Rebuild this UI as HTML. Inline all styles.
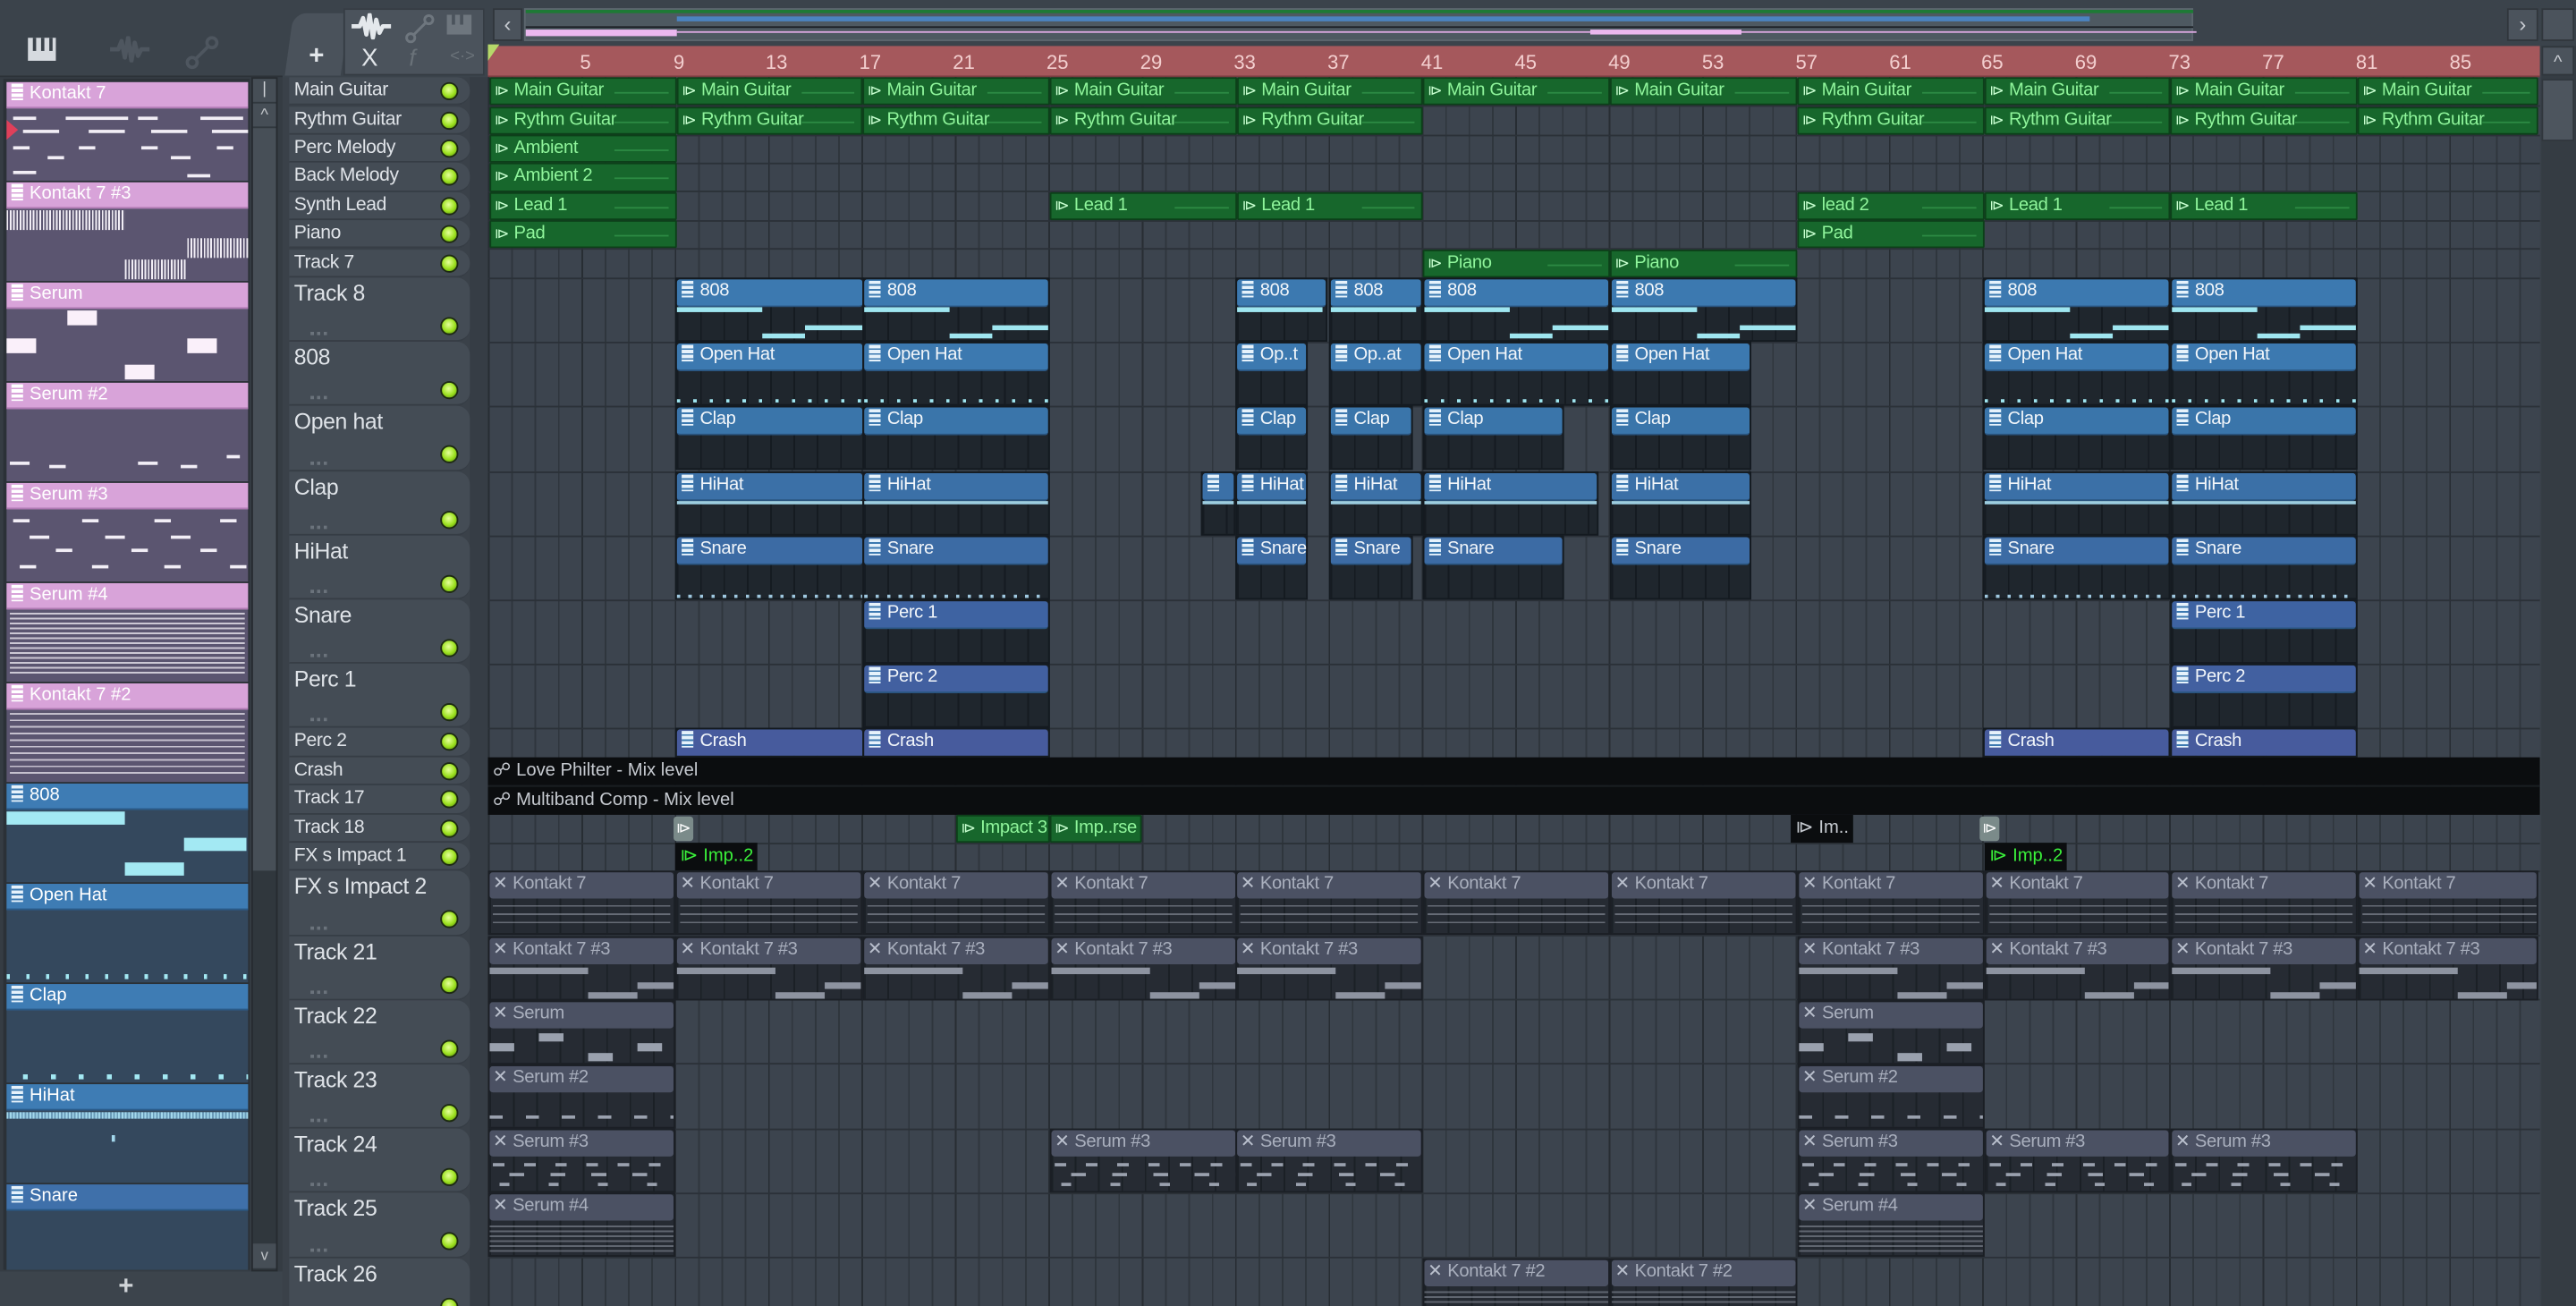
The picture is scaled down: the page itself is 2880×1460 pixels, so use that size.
<!DOCTYPE html>
<html><head><meta charset="utf-8">
<style>
html,body{margin:0;padding:0;width:2880px;height:1460px;overflow:hidden;background:#3a4149;}
#s{position:absolute;left:0;top:0;width:1568px;height:795px;transform:scale(1.836735,1.836478);transform-origin:0 0;font-family:"Liberation Sans Narrow","Liberation Sans",sans-serif;background:#3a4149;overflow:hidden}
.a{position:absolute;box-sizing:border-box}
.c{position:absolute;box-sizing:border-box;overflow:hidden;white-space:nowrap;font-size:11px;line-height:15px;letter-spacing:-0.2px}
.g{background:#17672c;border:1px solid #0c4019;color:#8ff59b;height:17.4px;padding-left:2px;border-radius:1px}
.g::after{content:"";position:absolute;left:75px;right:4px;top:8px;height:1px;background:#2c8a43}
.ar{font-size:9px;color:#c8ffd0;margin-right:3px}
.b{background:#1f262d;border:1px solid #141a20;height:39px;background-image:repeating-linear-gradient(90deg,#151b21 0 1px,transparent 1px 14.2px)}
.b .h{height:16px;background:#3c79b0;color:#f2f6fa;border-radius:2px;border-bottom:1px solid #2a5580;padding-left:2px}
.ic{display:inline-block;width:7px;height:10px;background:#e6f2fb;margin:0 4px 0 1px;vertical-align:-1px;background-image:repeating-linear-gradient(180deg,#e6f2fb 0 2px,#3c79b0 2px 3px)}
.k{background:#262b33;border:1px solid #1b1f25;height:39px;background-image:repeating-linear-gradient(90deg,#1b2026 0 1px,transparent 1px 14.2px)}
.k .h{height:16px;background:#4b5163;color:#a9afbd;border-radius:2px;padding-left:2px}
.x{color:#b9bfcc;margin-right:3px;font-size:11px}
.row{position:absolute;left:176px;width:110px;box-sizing:border-box;background:#444c55;border-radius:0 8px 8px 0;border-bottom:1px solid #363d45;color:#dfe3e8;font-size:11.5px;padding-left:3px;line-height:17px;letter-spacing:-0.2px}
.led{position:absolute;left:92px;width:9px;height:9px;border-radius:50%;background:radial-gradient(circle at 45% 40%,#e4ff9a,#9be01d 55%,#4e7c10);border:1px solid #1d2a12}
.dots{position:absolute;left:13px;bottom:3px;width:10px;height:2px;background:repeating-linear-gradient(90deg,#6b737c 0 2px,transparent 2px 4px)}
.tall{font-size:13.5px;line-height:20px}
.nt{position:absolute;height:3px;background:#9fe6f0}
.pk{position:absolute;left:4px;width:147px;height:60px;background:#5b5570}
.pk .h{height:15px;background:#d8a3d9;color:#fff;font-size:11px;line-height:15px;padding-left:2px;border-bottom:1px solid #b07ab4}
.pk .h .ic{background-image:repeating-linear-gradient(180deg,#fff 0 2px,#d8a3d9 2px 3px)}
.pb{position:absolute;left:4px;width:147px;height:60px;background:#34485d}
.pb .h{height:15px;background:#3e7cb4;color:#fff;font-size:11px;line-height:15px;padding-left:2px;border-bottom:1px solid #2a5a88}
.w{position:absolute;height:2px;background:#f2eef6}
.au{position:absolute;background:#0b0d0f;color:#c6cad0;font-size:11px;line-height:17px;padding-left:3px;white-space:nowrap;overflow:hidden;box-sizing:border-box}
</style></head><body><div id="s">

<div class="a" style="left:0;top:0;width:1568px;height:47px;background:#3b434b"></div>
<div class="a" style="left:0;top:46px;width:172px;height:1px;background:#2c3238"></div>
<div class="a" style="left:17px;top:23px;width:17px;height:14px;background:#d6dadf"></div>
<div class="a" style="left:20px;top:23px;width:2px;height:8px;background:#3b434b"></div>
<div class="a" style="left:25px;top:23px;width:2px;height:8px;background:#3b434b"></div>
<div class="a" style="left:30px;top:23px;width:2px;height:8px;background:#3b434b"></div>
<svg class="a" style="left:66px;top:22px" width="26" height="16"><path d="M1 8 L6 8 L8 3 L10 13 L12 1 L14 15 L16 4 L18 12 L20 8 L25 8" fill="none" stroke="#4e565f" stroke-width="2.6" stroke-linejoin="round"/></svg>
<svg class="a" style="left:112px;top:21px" width="22" height="22"><circle cx="5" cy="17" r="3" fill="none" stroke="#4e565f" stroke-width="2"/><circle cx="17" cy="5" r="3" fill="none" stroke="#4e565f" stroke-width="2"/><line x1="7" y1="15" x2="15" y2="7" stroke="#4e565f" stroke-width="2"/></svg>

<div class="a" style="left:176px;top:8px;width:34px;height:38px;background:#4a525b;border-radius:8px 0 0 0;transform:skewX(-8deg)"></div>
<div class="a" style="left:188px;top:26px;color:#e2e6ea;font-size:16px;font-weight:bold">+</div>
<div class="a" style="left:209px;top:5px;width:86px;height:41px;background:#4b535c;border:1px solid #353c43"></div>
<svg class="a" style="left:213px;top:8px" width="26" height="16"><path d="M1 8 L6 8 L8 3 L10 13 L12 1 L14 15 L16 4 L18 12 L20 8 L25 8" fill="none" stroke="#e4e8ec" stroke-width="2.6" stroke-linejoin="round"/></svg>
<svg class="a" style="left:246px;top:8px" width="20" height="20"><circle cx="4" cy="15" r="2.5" fill="none" stroke="#6e767e" stroke-width="1.6"/><circle cx="15" cy="4" r="2.5" fill="none" stroke="#6e767e" stroke-width="1.6"/><line x1="6" y1="13" x2="13" y2="6" stroke="#6e767e" stroke-width="1.6"/></svg>
<div class="a" style="left:272px;top:9px;width:15px;height:12px;background:#6e767e"></div>
<div class="a" style="left:275px;top:9px;width:2px;height:6px;background:#4b535c"></div>
<div class="a" style="left:280px;top:9px;width:2px;height:6px;background:#4b535c"></div>
<div class="a" style="left:220px;top:27px;color:#e2e6ea;font-size:15px">X</div>
<div class="a" style="left:249px;top:27px;color:#6a7279;font-size:14px;font-style:italic">f</div>
<div class="a" style="left:274px;top:29px;color:#6a7279;font-size:10px">&lt;·&gt;</div>
<div class="a" style="left:300px;top:5px;width:18px;height:20px;background:#4b535c;border:1px solid #30363c;color:#c8ccd2;font-size:13px;text-align:center;line-height:18px">‹</div>
<div class="a" style="left:319px;top:5px;width:1016px;height:20px;background:#4e5961;border:1px solid #5c666e"></div>
<div class="a" style="left:320px;top:6px;width:1015px;height:2px;background:#1e7a35"></div>
<div class="a" style="left:412px;top:10px;width:860px;height:3px;background:#4b83bf"></div>
<div class="a" style="left:320px;top:16px;width:1015px;height:1px;background:#1a1f24"></div>
<div class="a" style="left:320px;top:18px;width:92px;height:4px;background:#eab7ee"></div>
<div class="a" style="left:412px;top:19px;width:925px;height:1px;background:#dca8e0"></div>
<div class="a" style="left:968px;top:18px;width:92px;height:3px;background:#eab7ee"></div>
<div class="a" style="left:1526px;top:5px;width:19px;height:20px;background:#4b535c;border:1px solid #30363c;color:#c8ccd2;font-size:13px;text-align:center;line-height:18px">›</div>
<div class="a" style="left:1547px;top:5px;width:20px;height:20px;background:#4b535c;border:1px solid #30363c"></div>

<div class="a" style="left:297px;top:28px;width:1249px;height:19px;background:#a5585c;border-bottom:1px solid #7a3d40"></div>
<div class="a" style="left:297px;top:27px;width:0;height:0;border-left:7px solid #b6d86a;border-bottom:10px solid transparent"></div>
<div class="a" style="top:30px;left:0;width:1568px;height:16px;color:#f3cfcf;font-size:12px;line-height:16px">
<span class="a" style="left:353px">5</span><span class="a" style="left:410px">9</span><span class="a" style="left:466px">13</span><span class="a" style="left:523px">17</span><span class="a" style="left:580px">21</span><span class="a" style="left:637px">25</span><span class="a" style="left:694px">29</span><span class="a" style="left:751px">33</span><span class="a" style="left:808px">37</span><span class="a" style="left:865px">41</span><span class="a" style="left:922px">45</span><span class="a" style="left:979px">49</span><span class="a" style="left:1036px">53</span><span class="a" style="left:1093px">57</span><span class="a" style="left:1150px">61</span><span class="a" style="left:1206px">65</span><span class="a" style="left:1263px">69</span><span class="a" style="left:1320px">73</span><span class="a" style="left:1377px">77</span><span class="a" style="left:1434px">81</span><span class="a" style="left:1491px">85</span>
</div>
<div class="a" style="left:1547px;top:28px;width:21px;height:767px;background:#353c43"></div>
<div class="a" style="left:1547px;top:28px;width:20px;height:18px;background:#4b535c;border:1px solid #30363c;color:#c8ccd2;font-size:11px;text-align:center;line-height:18px">^</div>
<div class="a" style="left:1547px;top:48px;width:20px;height:38px;background:#4d555e;border:1px solid #30363c"></div>

<div class="a" style="left:286px;top:47px;width:11px;height:748px;background:#363d45"></div>
<div class="a" style="left:297px;top:47px;width:1249px;height:748px;background-color:#3c444e;background-image:repeating-linear-gradient(90deg,#272d33 0 1px,transparent 1px 56.85px),repeating-linear-gradient(90deg,#2f363d 0 1px,transparent 1px 14.2125px)"></div>
<div class="a" style="left:297px;top:47px;width:1249px;height:748px;background:transparent">
<div class="a" style="left:0;top:17px;width:100%;height:1px;background:#2b3138"></div>
<div class="a" style="left:0;top:34.5px;width:100%;height:1px;background:#2b3138"></div>
<div class="a" style="left:0;top:52px;width:100%;height:1px;background:#2b3138"></div>
<div class="a" style="left:0;top:69.3px;width:100%;height:1px;background:#2b3138"></div>
<div class="a" style="left:0;top:86.7px;width:100%;height:1px;background:#2b3138"></div>
<div class="a" style="left:0;top:104px;width:100%;height:1px;background:#2b3138"></div>
<div class="a" style="left:0;top:121.5px;width:100%;height:1px;background:#2b3138"></div>
<div class="a" style="left:0;top:161px;width:100%;height:1px;background:#2b3138"></div>
<div class="a" style="left:0;top:200px;width:100%;height:1px;background:#2b3138"></div>
<div class="a" style="left:0;top:239.5px;width:100%;height:1px;background:#2b3138"></div>
<div class="a" style="left:0;top:278.7px;width:100%;height:1px;background:#2b3138"></div>
<div class="a" style="left:0;top:318px;width:100%;height:1px;background:#2b3138"></div>
<div class="a" style="left:0;top:357px;width:100%;height:1px;background:#2b3138"></div>
<div class="a" style="left:0;top:396px;width:100%;height:1px;background:#2b3138"></div>
<div class="a" style="left:0;top:466px;width:100%;height:1px;background:#2b3138"></div>
<div class="a" style="left:0;top:483px;width:100%;height:1px;background:#2b3138"></div>
<div class="a" style="left:0;top:522px;width:100%;height:1px;background:#2b3138"></div>
<div class="a" style="left:0;top:561px;width:100%;height:1px;background:#2b3138"></div>
<div class="a" style="left:0;top:600px;width:100%;height:1px;background:#2b3138"></div>
<div class="a" style="left:0;top:640px;width:100%;height:1px;background:#2b3138"></div>
<div class="a" style="left:0;top:679px;width:100%;height:1px;background:#2b3138"></div>
<div class="a" style="left:0;top:718px;width:100%;height:1px;background:#2b3138"></div>
</div>

<div class="row" style="top:47px;height:17.4px">Main Guitar<div class="led" style="top:3px"></div></div>
<div class="row" style="top:64.5px;height:17.4px">Rythm Guitar<div class="led" style="top:3px"></div></div>
<div class="row" style="top:82px;height:17.4px">Perc Melody<div class="led" style="top:3px"></div></div>
<div class="row" style="top:99.3px;height:17.4px">Back Melody<div class="led" style="top:3px"></div></div>
<div class="row" style="top:116.7px;height:17.4px">Synth Lead<div class="led" style="top:3px"></div></div>
<div class="row" style="top:134px;height:17.4px">Piano<div class="led" style="top:3px"></div></div>
<div class="row" style="top:151.5px;height:17.4px">Track 7<div class="led" style="top:3px"></div></div>
<div class="row tall" style="top:169px;height:39.2px">Track 8<div class="led" style="top:24px"></div><div class="dots"></div></div>
<div class="row tall" style="top:208.2px;height:39.2px">808<div class="led" style="top:24px"></div><div class="dots"></div></div>
<div class="row tall" style="top:247.4px;height:39.2px">Open hat<div class="led" style="top:24px"></div><div class="dots"></div></div>
<div class="row tall" style="top:286.6px;height:39.2px">Clap<div class="led" style="top:24px"></div><div class="dots"></div></div>
<div class="row tall" style="top:325.8px;height:39.2px">HiHat<div class="led" style="top:24px"></div><div class="dots"></div></div>
<div class="row tall" style="top:365px;height:39.2px">Snare<div class="led" style="top:24px"></div><div class="dots"></div></div>
<div class="row tall" style="top:404.2px;height:39.2px">Perc 1<div class="led" style="top:24px"></div><div class="dots"></div></div>
<div class="row" style="top:443.4px;height:17.4px">Perc 2<div class="led" style="top:3px"></div></div>
<div class="row" style="top:460.8px;height:17.4px">Crash<div class="led" style="top:3px"></div></div>
<div class="row" style="top:478.2px;height:17.4px">Track 17<div class="led" style="top:3px"></div></div>
<div class="row" style="top:495.6px;height:17.4px">Track 18<div class="led" style="top:3px"></div></div>
<div class="row" style="top:513px;height:17.4px">FX s Impact 1<div class="led" style="top:3px"></div></div>
<div class="row tall" style="top:530.4px;height:39.2px">FX s Impact 2<div class="led" style="top:24px"></div><div class="dots"></div></div>
<div class="row tall" style="top:569.6px;height:39.2px">Track 21<div class="led" style="top:24px"></div><div class="dots"></div></div>
<div class="row tall" style="top:608.8px;height:39.2px">Track 22<div class="led" style="top:24px"></div><div class="dots"></div></div>
<div class="row tall" style="top:648px;height:39.2px">Track 23<div class="led" style="top:24px"></div><div class="dots"></div></div>
<div class="row tall" style="top:687.2px;height:39.2px">Track 24<div class="led" style="top:24px"></div><div class="dots"></div></div>
<div class="row tall" style="top:726.4px;height:39.2px">Track 25<div class="led" style="top:24px"></div><div class="dots"></div></div>
<div class="row tall" style="top:765.6px;height:39.2px">Track 26<div class="led" style="top:24px"></div><div class="dots"></div></div>

<div class="c g" style="left:298px;top:47px;width:114px"><span class="ar">⧐</span>Main Guitar</div>
<div class="c g" style="left:412px;top:47px;width:113px"><span class="ar">⧐</span>Main Guitar</div>
<div class="c g" style="left:525px;top:47px;width:114px"><span class="ar">⧐</span>Main Guitar</div>
<div class="c g" style="left:639px;top:47px;width:114px"><span class="ar">⧐</span>Main Guitar</div>
<div class="c g" style="left:753px;top:47px;width:113px"><span class="ar">⧐</span>Main Guitar</div>
<div class="c g" style="left:866px;top:47px;width:114px"><span class="ar">⧐</span>Main Guitar</div>
<div class="c g" style="left:980px;top:47px;width:114px"><span class="ar">⧐</span>Main Guitar</div>
<div class="c g" style="left:1094px;top:47px;width:114px"><span class="ar">⧐</span>Main Guitar</div>
<div class="c g" style="left:1208px;top:47px;width:113px"><span class="ar">⧐</span>Main Guitar</div>
<div class="c g" style="left:1321px;top:47px;width:114px"><span class="ar">⧐</span>Main Guitar</div>
<div class="c g" style="left:1435px;top:47px;width:110px"><span class="ar">⧐</span>Main Guitar</div>

<div class="c g" style="left:298px;top:64.5px;width:114px"><span class="ar">⧐</span>Rythm Guitar</div>
<div class="c g" style="left:412px;top:64.5px;width:113px"><span class="ar">⧐</span>Rythm Guitar</div>
<div class="c g" style="left:525px;top:64.5px;width:114px"><span class="ar">⧐</span>Rythm Guitar</div>
<div class="c g" style="left:639px;top:64.5px;width:114px"><span class="ar">⧐</span>Rythm Guitar</div>
<div class="c g" style="left:753px;top:64.5px;width:113px"><span class="ar">⧐</span>Rythm Guitar</div>
<div class="c g" style="left:1094px;top:64.5px;width:114px"><span class="ar">⧐</span>Rythm Guitar</div>
<div class="c g" style="left:1208px;top:64.5px;width:113px"><span class="ar">⧐</span>Rythm Guitar</div>
<div class="c g" style="left:1321px;top:64.5px;width:114px"><span class="ar">⧐</span>Rythm Guitar</div>
<div class="c g" style="left:1435px;top:64.5px;width:110px"><span class="ar">⧐</span>Rythm Guitar</div>

<div class="c g" style="left:298px;top:82px;width:114px"><span class="ar">⧐</span>Ambient</div>
<div class="c g" style="left:298px;top:99.3px;width:114px"><span class="ar">⧐</span>Ambient 2</div>
<div class="c g" style="left:298px;top:116.7px;width:114px"><span class="ar">⧐</span>Lead 1</div>
<div class="c g" style="left:639px;top:116.7px;width:114px"><span class="ar">⧐</span>Lead 1</div>
<div class="c g" style="left:753px;top:116.7px;width:113px"><span class="ar">⧐</span>Lead 1</div>
<div class="c g" style="left:1094px;top:116.7px;width:114px"><span class="ar">⧐</span>lead 2</div>
<div class="c g" style="left:1208px;top:116.7px;width:113px"><span class="ar">⧐</span>Lead 1</div>
<div class="c g" style="left:1321px;top:116.7px;width:114px"><span class="ar">⧐</span>Lead 1</div>
<div class="c g" style="left:298px;top:134px;width:114px"><span class="ar">⧐</span>Pad</div>
<div class="c g" style="left:1094px;top:134px;width:114px"><span class="ar">⧐</span>Pad</div>
<div class="c g" style="left:866px;top:151.5px;width:114px"><span class="ar">⧐</span>Piano</div>
<div class="c g" style="left:980px;top:151.5px;width:114px"><span class="ar">⧐</span>Piano</div>

<div class="c b" style="left:411px;top:169px;width:115px"><div class="h"><span class="ic"></span>808</div><div class="nt" style="left:0;top:17px;width:52px"></div><div class="nt" style="left:78px;top:28px;width:36px"></div><div class="nt" style="left:52px;top:33px;width:26px"></div></div>
<div class="c b" style="left:525px;top:169px;width:114px"><div class="h"><span class="ic"></span>808</div><div class="nt" style="left:0;top:17px;width:52px"></div><div class="nt" style="left:78px;top:28px;width:36px"></div><div class="nt" style="left:52px;top:33px;width:26px"></div></div>
<div class="c b" style="left:752px;top:169px;width:56px"><div class="h"><span class="ic"></span>808</div><div class="nt" style="left:0;top:17px;width:52px"></div></div>
<div class="c b" style="left:809px;top:169px;width:57px"><div class="h"><span class="ic"></span>808</div><div class="nt" style="left:0;top:17px;width:52px"></div></div>
<div class="c b" style="left:866px;top:169px;width:114px"><div class="h"><span class="ic"></span>808</div><div class="nt" style="left:0;top:17px;width:52px"></div><div class="nt" style="left:78px;top:28px;width:36px"></div><div class="nt" style="left:52px;top:33px;width:26px"></div></div>
<div class="c b" style="left:980px;top:169px;width:114px"><div class="h"><span class="ic"></span>808</div><div class="nt" style="left:0;top:17px;width:52px"></div><div class="nt" style="left:78px;top:28px;width:36px"></div><div class="nt" style="left:52px;top:33px;width:26px"></div></div>
<div class="c b" style="left:1207px;top:169px;width:114px"><div class="h"><span class="ic"></span>808</div><div class="nt" style="left:0;top:17px;width:52px"></div><div class="nt" style="left:78px;top:28px;width:36px"></div><div class="nt" style="left:52px;top:33px;width:26px"></div></div>
<div class="c b" style="left:1321px;top:169px;width:114px"><div class="h"><span class="ic"></span>808</div><div class="nt" style="left:0;top:17px;width:52px"></div><div class="nt" style="left:78px;top:28px;width:36px"></div><div class="nt" style="left:52px;top:33px;width:26px"></div></div>

<div class="c b" style="left:411px;top:208.2px;width:115px"><div class="h"><span class="ic"></span>Open Hat</div><div class="nt" style="left:0;top:34px;width:100%;height:2px;background:repeating-linear-gradient(90deg,#9fe6f0 0 2px,transparent 2px 10px)"></div></div>
<div class="c b" style="left:525px;top:208.2px;width:114px"><div class="h"><span class="ic"></span>Open Hat</div><div class="nt" style="left:0;top:34px;width:100%;height:2px;background:repeating-linear-gradient(90deg,#9fe6f0 0 2px,transparent 2px 10px)"></div></div>
<div class="c b" style="left:752px;top:208.2px;width:44px"><div class="h"><span class="ic"></span>Op..t</div></div>
<div class="c b" style="left:809px;top:208.2px;width:57px"><div class="h"><span class="ic"></span>Op..at</div></div>
<div class="c b" style="left:866px;top:208.2px;width:114px"><div class="h"><span class="ic"></span>Open Hat</div><div class="nt" style="left:0;top:34px;width:100%;height:2px;background:repeating-linear-gradient(90deg,#9fe6f0 0 2px,transparent 2px 10px)"></div></div>
<div class="c b" style="left:980px;top:208.2px;width:86px"><div class="h"><span class="ic"></span>Open Hat</div></div>
<div class="c b" style="left:1207px;top:208.2px;width:114px"><div class="h"><span class="ic"></span>Open Hat</div><div class="nt" style="left:0;top:34px;width:100%;height:2px;background:repeating-linear-gradient(90deg,#9fe6f0 0 2px,transparent 2px 10px)"></div></div>
<div class="c b" style="left:1321px;top:208.2px;width:114px"><div class="h"><span class="ic"></span>Open Hat</div><div class="nt" style="left:0;top:34px;width:100%;height:2px;background:repeating-linear-gradient(90deg,#9fe6f0 0 2px,transparent 2px 10px)"></div></div>

<div class="c b" style="left:411px;top:247.4px;width:115px"><div class="h" style="background:#3a75aa"><span class="ic"></span>Clap</div></div>
<div class="c b" style="left:525px;top:247.4px;width:114px"><div class="h" style="background:#3a75aa"><span class="ic"></span>Clap</div></div>
<div class="c b" style="left:752px;top:247.4px;width:44px"><div class="h" style="background:#3a75aa"><span class="ic"></span>Clap</div></div>
<div class="c b" style="left:809px;top:247.4px;width:51px"><div class="h" style="background:#3a75aa"><span class="ic"></span>Clap</div></div>
<div class="c b" style="left:866px;top:247.4px;width:86px"><div class="h" style="background:#3a75aa"><span class="ic"></span>Clap</div></div>
<div class="c b" style="left:980px;top:247.4px;width:86px"><div class="h" style="background:#3a75aa"><span class="ic"></span>Clap</div></div>
<div class="c b" style="left:1207px;top:247.4px;width:114px"><div class="h" style="background:#3a75aa"><span class="ic"></span>Clap</div></div>
<div class="c b" style="left:1321px;top:247.4px;width:114px"><div class="h" style="background:#3a75aa"><span class="ic"></span>Clap</div></div>

<div class="c b" style="left:411px;top:286.6px;width:115px"><div class="h" style="background:#3b70a7"><span class="ic"></span>HiHat</div><div class="nt" style="left:0;top:17px;width:100%;height:2px;background:#9ccde0"></div></div>
<div class="c b" style="left:525px;top:286.6px;width:114px"><div class="h" style="background:#3b70a7"><span class="ic"></span>HiHat</div><div class="nt" style="left:0;top:17px;width:100%;height:2px;background:#9ccde0"></div></div>
<div class="c b" style="left:731px;top:286.6px;width:21px"><div class="h" style="background:#3b70a7"><span class="ic"></span></div><div class="nt" style="left:0;top:17px;width:100%;height:2px;background:#9ccde0"></div></div>
<div class="c b" style="left:752px;top:286.6px;width:44px"><div class="h" style="background:#3b70a7"><span class="ic"></span>HiHat</div><div class="nt" style="left:0;top:17px;width:100%;height:2px;background:#9ccde0"></div></div>
<div class="c b" style="left:809px;top:286.6px;width:57px"><div class="h" style="background:#3b70a7"><span class="ic"></span>HiHat</div><div class="nt" style="left:0;top:17px;width:100%;height:2px;background:#9ccde0"></div></div>
<div class="c b" style="left:866px;top:286.6px;width:107px"><div class="h" style="background:#3b70a7"><span class="ic"></span>HiHat</div><div class="nt" style="left:0;top:17px;width:100%;height:2px;background:#9ccde0"></div></div>
<div class="c b" style="left:980px;top:286.6px;width:86px"><div class="h" style="background:#3b70a7"><span class="ic"></span>HiHat</div><div class="nt" style="left:0;top:17px;width:100%;height:2px;background:#9ccde0"></div></div>
<div class="c b" style="left:1207px;top:286.6px;width:114px"><div class="h" style="background:#3b70a7"><span class="ic"></span>HiHat</div><div class="nt" style="left:0;top:17px;width:100%;height:2px;background:#9ccde0"></div></div>
<div class="c b" style="left:1321px;top:286.6px;width:114px"><div class="h" style="background:#3b70a7"><span class="ic"></span>HiHat</div><div class="nt" style="left:0;top:17px;width:100%;height:2px;background:#9ccde0"></div></div>

<div class="c b" style="left:411px;top:325.8px;width:115px"><div class="h" style="background:#3c6ba4"><span class="ic"></span>Snare</div><div class="nt" style="left:0;top:35px;width:100%;height:2px;background:repeating-linear-gradient(90deg,#9fc8e0 0 2px,transparent 2px 7px)"></div></div>
<div class="c b" style="left:525px;top:325.8px;width:114px"><div class="h" style="background:#3c6ba4"><span class="ic"></span>Snare</div><div class="nt" style="left:0;top:35px;width:100%;height:2px;background:repeating-linear-gradient(90deg,#9fc8e0 0 2px,transparent 2px 7px)"></div></div>
<div class="c b" style="left:752px;top:325.8px;width:44px"><div class="h" style="background:#3c6ba4"><span class="ic"></span>Snare</div></div>
<div class="c b" style="left:809px;top:325.8px;width:51px"><div class="h" style="background:#3c6ba4"><span class="ic"></span>Snare</div></div>
<div class="c b" style="left:866px;top:325.8px;width:86px"><div class="h" style="background:#3c6ba4"><span class="ic"></span>Snare</div></div>
<div class="c b" style="left:980px;top:325.8px;width:86px"><div class="h" style="background:#3c6ba4"><span class="ic"></span>Snare</div></div>
<div class="c b" style="left:1207px;top:325.8px;width:114px"><div class="h" style="background:#3c6ba4"><span class="ic"></span>Snare</div><div class="nt" style="left:0;top:35px;width:100%;height:2px;background:repeating-linear-gradient(90deg,#9fc8e0 0 2px,transparent 2px 7px)"></div></div>
<div class="c b" style="left:1321px;top:325.8px;width:114px"><div class="h" style="background:#3c6ba4"><span class="ic"></span>Snare</div><div class="nt" style="left:0;top:35px;width:100%;height:2px;background:repeating-linear-gradient(90deg,#9fc8e0 0 2px,transparent 2px 7px)"></div></div>

<div class="c b" style="left:525px;top:365px;width:114px"><div class="h" style="background:#3e63a2"><span class="ic"></span>Perc 1</div></div>
<div class="c b" style="left:1321px;top:365px;width:114px"><div class="h" style="background:#3e63a2"><span class="ic"></span>Perc 1</div></div>
<div class="c b" style="left:525px;top:404.2px;width:114px"><div class="h" style="background:#4260a0"><span class="ic"></span>Perc 2</div></div>
<div class="c b" style="left:1321px;top:404.2px;width:114px"><div class="h" style="background:#4260a0"><span class="ic"></span>Perc 2</div></div>

<div class="c b" style="left:411px;top:443.4px;width:115px;height:17.4px"><div class="h" style="background:#475b9d;height:17px"><span class="ic"></span>Crash</div></div>
<div class="c b" style="left:525px;top:443.4px;width:114px;height:17.4px"><div class="h" style="background:#475b9d;height:17px"><span class="ic"></span>Crash</div></div>
<div class="c b" style="left:1207px;top:443.4px;width:114px;height:17.4px"><div class="h" style="background:#475b9d;height:17px"><span class="ic"></span>Crash</div></div>
<div class="c b" style="left:1321px;top:443.4px;width:114px;height:17.4px"><div class="h" style="background:#475b9d;height:17px"><span class="ic"></span>Crash</div></div>

<div class="au" style="left:297px;top:460.8px;width:1249px;height:17.4px">☍ Love Philter - Mix level</div>
<div class="au" style="left:297px;top:478.2px;width:1249px;height:17.4px;border-top:1px solid #1a1e22">☍ Multiband Comp - Mix level</div>

<div class="c" style="left:410px;top:497px;width:12px;height:15px;background:#7b8b8a;border-radius:2px;color:#fff;font-size:9px;text-align:center">⧐</div>
<div class="c g" style="left:582px;top:495.6px;width:57px"><span class="ar">⧐</span>Impact 3</div>
<div class="c g" style="left:639px;top:495.6px;width:56px"><span class="ar">⧐</span>Imp..rse</div>
<div class="au" style="left:1090px;top:495.6px;width:38px;height:17.4px">⧐ Im..</div>
<div class="c" style="left:1205px;top:497px;width:12px;height:15px;background:#7b8b8a;border-radius:2px;color:#fff;font-size:9px;text-align:center">⧐</div>
<div class="au" style="left:411px;top:513px;width:50px;height:17.4px;color:#3af03a">⧐ Imp..2</div>
<div class="au" style="left:1208px;top:513px;width:50px;height:17.4px;color:#3af03a">⧐ Imp..2</div>

<div class="c k" style="left:297px;top:530.4px;width:114px"><div class="h"><span class="x">✕</span>Kontakt 7</div><div class="a" style="left:2px;top:20px;width:108px;height:14px;background:repeating-linear-gradient(180deg,#9aa0ac 0 1px,transparent 1px 5px);opacity:.55"></div></div>
<div class="c k" style="left:411px;top:530.4px;width:114px"><div class="h"><span class="x">✕</span>Kontakt 7</div><div class="a" style="left:2px;top:20px;width:108px;height:14px;background:repeating-linear-gradient(180deg,#9aa0ac 0 1px,transparent 1px 5px);opacity:.55"></div></div>
<div class="c k" style="left:525px;top:530.4px;width:114px"><div class="h"><span class="x">✕</span>Kontakt 7</div><div class="a" style="left:2px;top:20px;width:108px;height:14px;background:repeating-linear-gradient(180deg,#9aa0ac 0 1px,transparent 1px 5px);opacity:.55"></div></div>
<div class="c k" style="left:639px;top:530.4px;width:114px"><div class="h"><span class="x">✕</span>Kontakt 7</div><div class="a" style="left:2px;top:20px;width:108px;height:14px;background:repeating-linear-gradient(180deg,#9aa0ac 0 1px,transparent 1px 5px);opacity:.55"></div></div>
<div class="c k" style="left:752px;top:530.4px;width:114px"><div class="h"><span class="x">✕</span>Kontakt 7</div><div class="a" style="left:2px;top:20px;width:108px;height:14px;background:repeating-linear-gradient(180deg,#9aa0ac 0 1px,transparent 1px 5px);opacity:.55"></div></div>
<div class="c k" style="left:866px;top:530.4px;width:114px"><div class="h"><span class="x">✕</span>Kontakt 7</div><div class="a" style="left:2px;top:20px;width:108px;height:14px;background:repeating-linear-gradient(180deg,#9aa0ac 0 1px,transparent 1px 5px);opacity:.55"></div></div>
<div class="c k" style="left:980px;top:530.4px;width:114px"><div class="h"><span class="x">✕</span>Kontakt 7</div><div class="a" style="left:2px;top:20px;width:108px;height:14px;background:repeating-linear-gradient(180deg,#9aa0ac 0 1px,transparent 1px 5px);opacity:.55"></div></div>
<div class="c k" style="left:1094px;top:530.4px;width:114px"><div class="h"><span class="x">✕</span>Kontakt 7</div><div class="a" style="left:2px;top:20px;width:108px;height:14px;background:repeating-linear-gradient(180deg,#9aa0ac 0 1px,transparent 1px 5px);opacity:.55"></div></div>
<div class="c k" style="left:1208px;top:530.4px;width:113px"><div class="h"><span class="x">✕</span>Kontakt 7</div><div class="a" style="left:2px;top:20px;width:108px;height:14px;background:repeating-linear-gradient(180deg,#9aa0ac 0 1px,transparent 1px 5px);opacity:.55"></div></div>
<div class="c k" style="left:1321px;top:530.4px;width:114px"><div class="h"><span class="x">✕</span>Kontakt 7</div><div class="a" style="left:2px;top:20px;width:108px;height:14px;background:repeating-linear-gradient(180deg,#9aa0ac 0 1px,transparent 1px 5px);opacity:.55"></div></div>
<div class="c k" style="left:1435px;top:530.4px;width:110px"><div class="h"><span class="x">✕</span>Kontakt 7</div><div class="a" style="left:2px;top:20px;width:106px;height:14px;background:repeating-linear-gradient(180deg,#9aa0ac 0 1px,transparent 1px 5px);opacity:.55"></div></div>

<div class="c k" style="left:297px;top:569.6px;width:114px"><div class="h"><span class="x">✕</span>Kontakt 7 #3</div><div class="a" style="left:0;top:18px;width:60px;height:4px;background:#8d93a0"></div><div class="a" style="left:90px;top:27px;width:24px;height:4px;background:#8d93a0"></div><div class="a" style="left:60px;top:33px;width:30px;height:4px;background:#8d93a0"></div></div>
<div class="c k" style="left:411px;top:569.6px;width:114px"><div class="h"><span class="x">✕</span>Kontakt 7 #3</div><div class="a" style="left:0;top:18px;width:60px;height:4px;background:#8d93a0"></div><div class="a" style="left:90px;top:27px;width:24px;height:4px;background:#8d93a0"></div><div class="a" style="left:60px;top:33px;width:30px;height:4px;background:#8d93a0"></div></div>
<div class="c k" style="left:525px;top:569.6px;width:114px"><div class="h"><span class="x">✕</span>Kontakt 7 #3</div><div class="a" style="left:0;top:18px;width:60px;height:4px;background:#8d93a0"></div><div class="a" style="left:90px;top:27px;width:24px;height:4px;background:#8d93a0"></div><div class="a" style="left:60px;top:33px;width:30px;height:4px;background:#8d93a0"></div></div>
<div class="c k" style="left:639px;top:569.6px;width:114px"><div class="h"><span class="x">✕</span>Kontakt 7 #3</div><div class="a" style="left:0;top:18px;width:60px;height:4px;background:#8d93a0"></div><div class="a" style="left:90px;top:27px;width:24px;height:4px;background:#8d93a0"></div><div class="a" style="left:60px;top:33px;width:30px;height:4px;background:#8d93a0"></div></div>
<div class="c k" style="left:752px;top:569.6px;width:114px"><div class="h"><span class="x">✕</span>Kontakt 7 #3</div><div class="a" style="left:0;top:18px;width:60px;height:4px;background:#8d93a0"></div><div class="a" style="left:90px;top:27px;width:24px;height:4px;background:#8d93a0"></div><div class="a" style="left:60px;top:33px;width:30px;height:4px;background:#8d93a0"></div></div>
<div class="c k" style="left:1094px;top:569.6px;width:114px"><div class="h"><span class="x">✕</span>Kontakt 7 #3</div><div class="a" style="left:0;top:18px;width:60px;height:4px;background:#8d93a0"></div><div class="a" style="left:90px;top:27px;width:24px;height:4px;background:#8d93a0"></div><div class="a" style="left:60px;top:33px;width:30px;height:4px;background:#8d93a0"></div></div>
<div class="c k" style="left:1208px;top:569.6px;width:113px"><div class="h"><span class="x">✕</span>Kontakt 7 #3</div><div class="a" style="left:0;top:18px;width:60px;height:4px;background:#8d93a0"></div><div class="a" style="left:90px;top:27px;width:24px;height:4px;background:#8d93a0"></div><div class="a" style="left:60px;top:33px;width:30px;height:4px;background:#8d93a0"></div></div>
<div class="c k" style="left:1321px;top:569.6px;width:114px"><div class="h"><span class="x">✕</span>Kontakt 7 #3</div><div class="a" style="left:0;top:18px;width:60px;height:4px;background:#8d93a0"></div><div class="a" style="left:90px;top:27px;width:24px;height:4px;background:#8d93a0"></div><div class="a" style="left:60px;top:33px;width:30px;height:4px;background:#8d93a0"></div></div>
<div class="c k" style="left:1435px;top:569.6px;width:110px"><div class="h"><span class="x">✕</span>Kontakt 7 #3</div><div class="a" style="left:0;top:18px;width:60px;height:4px;background:#8d93a0"></div><div class="a" style="left:90px;top:27px;width:20px;height:4px;background:#8d93a0"></div><div class="a" style="left:60px;top:33px;width:30px;height:4px;background:#8d93a0"></div></div>

<div class="c k" style="left:297px;top:608.8px;width:114px"><div class="h"><span class="x">✕</span>Serum</div><div class="a" style="left:30px;top:19px;width:15px;height:5px;background:#9aa1ae"></div><div class="a" style="left:0;top:25px;width:15px;height:5px;background:#9aa1ae"></div><div class="a" style="left:90px;top:25px;width:15px;height:5px;background:#9aa1ae"></div><div class="a" style="left:60px;top:31px;width:15px;height:5px;background:#9aa1ae"></div></div>
<div class="c k" style="left:1094px;top:608.8px;width:114px"><div class="h"><span class="x">✕</span>Serum</div><div class="a" style="left:30px;top:19px;width:15px;height:5px;background:#9aa1ae"></div><div class="a" style="left:0;top:25px;width:15px;height:5px;background:#9aa1ae"></div><div class="a" style="left:90px;top:25px;width:15px;height:5px;background:#9aa1ae"></div><div class="a" style="left:60px;top:31px;width:15px;height:5px;background:#9aa1ae"></div></div>
<div class="c k" style="left:297px;top:648px;width:114px"><div class="h"><span class="x">✕</span>Serum #2</div><div class="a" style="left:0;top:30px;width:100%;height:2px;background:repeating-linear-gradient(90deg,#9aa1ae 0 8px,transparent 8px 22px)"></div></div>
<div class="c k" style="left:1094px;top:648px;width:114px"><div class="h"><span class="x">✕</span>Serum #2</div><div class="a" style="left:0;top:30px;width:100%;height:2px;background:repeating-linear-gradient(90deg,#9aa1ae 0 8px,transparent 8px 22px)"></div></div>
<div class="c k" style="left:297px;top:687.2px;width:114px"><div class="h"><span class="x">✕</span>Serum #3</div><div class="a" style="left:2px;top:20px;width:110px;height:2px;background:repeating-linear-gradient(90deg,#9aa1ae 0 7px,transparent 7px 19px)"></div><div class="a" style="left:12px;top:26px;width:100px;height:2px;background:repeating-linear-gradient(90deg,#9aa1ae 0 9px,transparent 9px 25px)"></div><div class="a" style="left:6px;top:32px;width:104px;height:2px;background:repeating-linear-gradient(90deg,#9aa1ae 0 6px,transparent 6px 30px)"></div></div>
<div class="c k" style="left:639px;top:687.2px;width:114px"><div class="h"><span class="x">✕</span>Serum #3</div><div class="a" style="left:2px;top:20px;width:110px;height:2px;background:repeating-linear-gradient(90deg,#9aa1ae 0 7px,transparent 7px 19px)"></div><div class="a" style="left:12px;top:26px;width:100px;height:2px;background:repeating-linear-gradient(90deg,#9aa1ae 0 9px,transparent 9px 25px)"></div><div class="a" style="left:6px;top:32px;width:104px;height:2px;background:repeating-linear-gradient(90deg,#9aa1ae 0 6px,transparent 6px 30px)"></div></div>
<div class="c k" style="left:752px;top:687.2px;width:114px"><div class="h"><span class="x">✕</span>Serum #3</div><div class="a" style="left:2px;top:20px;width:110px;height:2px;background:repeating-linear-gradient(90deg,#9aa1ae 0 7px,transparent 7px 19px)"></div><div class="a" style="left:12px;top:26px;width:100px;height:2px;background:repeating-linear-gradient(90deg,#9aa1ae 0 9px,transparent 9px 25px)"></div><div class="a" style="left:6px;top:32px;width:104px;height:2px;background:repeating-linear-gradient(90deg,#9aa1ae 0 6px,transparent 6px 30px)"></div></div>
<div class="c k" style="left:1094px;top:687.2px;width:114px"><div class="h"><span class="x">✕</span>Serum #3</div><div class="a" style="left:2px;top:20px;width:110px;height:2px;background:repeating-linear-gradient(90deg,#9aa1ae 0 7px,transparent 7px 19px)"></div><div class="a" style="left:12px;top:26px;width:100px;height:2px;background:repeating-linear-gradient(90deg,#9aa1ae 0 9px,transparent 9px 25px)"></div><div class="a" style="left:6px;top:32px;width:104px;height:2px;background:repeating-linear-gradient(90deg,#9aa1ae 0 6px,transparent 6px 30px)"></div></div>
<div class="c k" style="left:1208px;top:687.2px;width:113px"><div class="h"><span class="x">✕</span>Serum #3</div><div class="a" style="left:2px;top:20px;width:110px;height:2px;background:repeating-linear-gradient(90deg,#9aa1ae 0 7px,transparent 7px 19px)"></div><div class="a" style="left:12px;top:26px;width:100px;height:2px;background:repeating-linear-gradient(90deg,#9aa1ae 0 9px,transparent 9px 25px)"></div><div class="a" style="left:6px;top:32px;width:104px;height:2px;background:repeating-linear-gradient(90deg,#9aa1ae 0 6px,transparent 6px 30px)"></div></div>
<div class="c k" style="left:1321px;top:687.2px;width:114px"><div class="h"><span class="x">✕</span>Serum #3</div><div class="a" style="left:2px;top:20px;width:110px;height:2px;background:repeating-linear-gradient(90deg,#9aa1ae 0 7px,transparent 7px 19px)"></div><div class="a" style="left:12px;top:26px;width:100px;height:2px;background:repeating-linear-gradient(90deg,#9aa1ae 0 9px,transparent 9px 25px)"></div><div class="a" style="left:6px;top:32px;width:104px;height:2px;background:repeating-linear-gradient(90deg,#9aa1ae 0 6px,transparent 6px 30px)"></div></div>
<div class="c k" style="left:297px;top:726.4px;width:114px"><div class="h"><span class="x">✕</span>Serum #4</div><div class="a" style="left:0;top:19px;width:100%;height:16px;background:repeating-linear-gradient(180deg,#9aa1ae 0 1px,transparent 1px 3px);opacity:.5"></div></div>
<div class="c k" style="left:1094px;top:726.4px;width:114px"><div class="h"><span class="x">✕</span>Serum #4</div><div class="a" style="left:0;top:19px;width:100%;height:16px;background:repeating-linear-gradient(180deg,#9aa1ae 0 1px,transparent 1px 3px);opacity:.5"></div></div>
<div class="c k" style="left:866px;top:765.6px;width:114px"><div class="h"><span class="x">✕</span>Kontakt 7 #2</div><div class="a" style="left:0;top:19px;width:100%;height:16px;background:repeating-linear-gradient(180deg,#9aa1ae 0 1px,transparent 1px 3px);opacity:.5"></div></div>
<div class="c k" style="left:980px;top:765.6px;width:114px"><div class="h"><span class="x">✕</span>Kontakt 7 #2</div><div class="a" style="left:0;top:19px;width:100%;height:16px;background:repeating-linear-gradient(180deg,#9aa1ae 0 1px,transparent 1px 3px);opacity:.5"></div></div>

<div class="a" style="left:0;top:47px;width:172px;height:748px;background:#353c43"></div>
<div class="a" style="left:2px;top:48px;width:150px;height:725px;background:#2b3137"></div>
<div class="pk" style="top:50px"><div class="h"><span class="ic"></span>Kontakt 7</div>
<div class="w" style="left:4px;top:21px;width:14px"></div><div class="w" style="left:36px;top:21px;width:38px"></div><div class="w" style="left:80px;top:21px;width:12px"></div><div class="w" style="left:118px;top:21px;width:26px"></div>
<div class="w" style="left:10px;top:29px;width:22px"></div><div class="w" style="left:50px;top:29px;width:22px"></div><div class="w" style="left:88px;top:29px;width:22px"></div><div class="w" style="left:125px;top:29px;width:22px"></div>
<div class="w" style="left:4px;top:39px;width:10px"></div><div class="w" style="left:44px;top:39px;width:10px"></div><div class="w" style="left:82px;top:39px;width:10px"></div><div class="w" style="left:128px;top:39px;width:10px"></div>
<div class="w" style="left:25px;top:45px;width:10px"></div><div class="w" style="left:100px;top:45px;width:12px"></div><div class="w" style="left:4px;top:54px;width:14px"></div><div class="w" style="left:110px;top:56px;width:14px"></div></div>
<div class="a" style="left:4px;top:73px;width:0;height:0;border-left:7px solid #e0405a;border-top:6px solid transparent;border-bottom:6px solid transparent"></div>
<div class="pk" style="top:111px"><div class="h"><span class="ic"></span>Kontakt 7 #3</div><div class="a" style="left:0;top:17px;width:72px;height:12px;background:repeating-linear-gradient(90deg,#f2eef6 0 1px,#5b5570 1px 2px)"></div><div class="a" style="left:110px;top:34px;width:37px;height:12px;background:repeating-linear-gradient(90deg,#f2eef6 0 1px,#5b5570 1px 2px)"></div><div class="a" style="left:72px;top:47px;width:37px;height:12px;background:repeating-linear-gradient(90deg,#f2eef6 0 1px,#5b5570 1px 2px)"></div></div>
<div class="pk" style="top:172px"><div class="h"><span class="ic"></span>Serum</div><div class="a" style="left:37px;top:17px;width:18px;height:9px;background:#faf0fa"></div><div class="a" style="left:0;top:34px;width:18px;height:9px;background:#faf0fa"></div><div class="a" style="left:110px;top:34px;width:18px;height:9px;background:#faf0fa"></div><div class="a" style="left:72px;top:50px;width:18px;height:9px;background:#faf0fa"></div></div>
<div class="pk" style="top:233px"><div class="h"><span class="ic"></span>Serum #2</div><div class="w" style="left:2px;top:48px;width:12px"></div><div class="w" style="left:26px;top:50px;width:10px"></div><div class="w" style="left:80px;top:48px;width:12px"></div><div class="w" style="left:106px;top:50px;width:10px"></div><div class="w" style="left:134px;top:44px;width:8px"></div></div>
<div class="pk" style="top:294px"><div class="h"><span class="ic"></span>Serum #3</div>
<div class="w" style="left:4px;top:22px;width:10px"></div><div class="w" style="left:46px;top:22px;width:10px"></div><div class="w" style="left:90px;top:22px;width:10px"></div><div class="w" style="left:130px;top:22px;width:10px"></div>
<div class="w" style="left:14px;top:32px;width:12px"></div><div class="w" style="left:60px;top:32px;width:12px"></div><div class="w" style="left:100px;top:32px;width:12px"></div>
<div class="w" style="left:30px;top:40px;width:10px"></div><div class="w" style="left:76px;top:40px;width:10px"></div><div class="w" style="left:118px;top:40px;width:10px"></div>
<div class="w" style="left:8px;top:50px;width:10px"></div><div class="w" style="left:52px;top:50px;width:10px"></div><div class="w" style="left:96px;top:50px;width:10px"></div><div class="w" style="left:136px;top:50px;width:10px"></div></div>
<div class="pk" style="top:355px"><div class="h"><span class="ic"></span>Serum #4</div><div class="a" style="left:2px;top:18px;width:143px;height:38px;background:repeating-linear-gradient(180deg,#f2eef6 0 1px,transparent 1px 3px);opacity:.75"></div></div>
<div class="pk" style="top:416px"><div class="h"><span class="ic"></span>Kontakt 7 #2</div><div class="a" style="left:2px;top:18px;width:143px;height:38px;background:repeating-linear-gradient(180deg,#f2eef6 0 1px,transparent 1px 4px);opacity:.7"></div></div>
<div class="pb" style="top:477px"><div class="h"><span class="ic"></span>808</div><div class="a" style="left:0;top:17px;width:72px;height:8px;background:#a3e9f3"></div><div class="a" style="left:108px;top:33px;width:38px;height:8px;background:#a3e9f3"></div><div class="a" style="left:72px;top:48px;width:36px;height:8px;background:#a3e9f3"></div></div>
<div class="pb" style="top:538px"><div class="h"><span class="ic"></span>Open Hat</div><div class="a" style="left:0;top:55px;width:147px;height:3px;background:repeating-linear-gradient(90deg,#a3e9f3 0 2px,transparent 2px 12px)"></div></div>
<div class="pb" style="top:599px"><div class="h"><span class="ic"></span>Clap</div><div class="a" style="left:10px;top:55px;width:137px;height:3px;background:repeating-linear-gradient(90deg,#a3e9f3 0 3px,transparent 3px 17px)"></div></div>
<div class="pb" style="top:660px"><div class="h"><span class="ic"></span>HiHat</div><div class="a" style="left:0;top:17px;width:147px;height:4px;background:repeating-linear-gradient(90deg,#a3d8ec 0 1px,#6a9ab8 1px 2px)"></div><div class="a" style="left:64px;top:31px;width:2px;height:4px;background:#a3d8ec"></div></div>
<div class="pb" style="top:721px;height:52px"><div class="h" style="background:#3f70aa"><span class="ic"></span>Snare</div></div>
<div class="a" style="left:153px;top:47px;width:16px;height:727px;background:#30373d;border:1px solid #262b30"></div>
<div class="a" style="left:154px;top:48px;width:14px;height:14px;background:#464e56;color:#d0d4d8;font-size:10px;text-align:center;line-height:14px">|</div>
<div class="a" style="left:154px;top:63px;width:14px;height:14px;background:#464e56;color:#c0c4c8;font-size:10px;text-align:center;line-height:16px">^</div>
<div class="a" style="left:154px;top:78px;width:14px;height:452px;background:#474f57"></div>
<div class="a" style="left:154px;top:757px;width:14px;height:15px;background:#464e56;color:#c0c4c8;font-size:9px;text-align:center;line-height:15px">v</div>
<div class="a" style="left:0;top:774px;width:172px;height:21px;background:#3c444c"></div>
<div class="a" style="left:72px;top:775px;color:#d0d4d8;font-size:16px;font-weight:bold">+</div>

</div></body></html>
